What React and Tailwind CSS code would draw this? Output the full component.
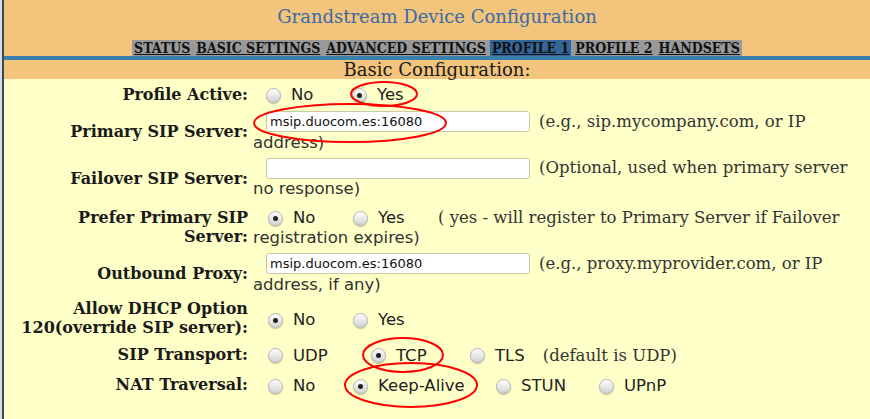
import React from "react";

const serif = "font-['DejaVu_Serif','Liberation_Serif',serif]";
const cond = "font-['DejaVu_Serif_Condensed','DejaVu_Serif',serif]";
const sans = "font-['DejaVu_Sans','Liberation_Sans',sans-serif]";

const tabs = [
  { name: "STATUS" },
  { name: "BASIC SETTINGS" },
  { name: "ADVANCED SETTINGS" },
  { name: "PROFILE 1", active: true },
  { name: "PROFILE 2" },
  { name: "HANDSETS" },
];

function Radio({ checked }) {
  return (
    <span className="relative inline-flex h-[15px] w-[15px] shrink-0 items-center justify-center rounded-full border border-[#b4b4b4] bg-linear-to-b from-white to-[#d2d2d2] shadow-[0_1px_1px_rgba(0,0,0,0.25)]">
      {checked && <span className="h-[5px] w-[5px] rounded-full bg-[#222]" />}
    </span>
  );
}

function Option({ label, checked, width }) {
  return (
    <div className={`flex items-center ${width || ""}`}>
      <Radio checked={checked} />
      <span className={`${sans} ml-[10px] text-[16.5px] text-[#222]`}>{label}</span>
    </div>
  );
}

function Row({ label, h, children }) {
  return (
    <div className={`flex items-center ${h}`}>
      <div className={`${serif} w-[244px] shrink-0 text-right text-[16px] font-bold leading-[19px] text-[#1a1a1a]`}>
        {label}
      </div>
      <div className="ml-[5px] flex-1 whitespace-nowrap text-[16.5px] leading-[20px] text-[#333]">
        {children}
      </div>
    </div>
  );
}

function TextBox({ value }) {
  return (
    <input
      readOnly
      value={value}
      className={`${sans} ml-[13px] h-[21px] w-[264px] rounded-[3px] border border-[#c9c9a8] bg-white px-[3px] text-[13px] text-[#111] outline-none`}
    />
  );
}

export default function App() {
  return (
    <div className="flex h-[419px] w-[870px] overflow-hidden bg-[#ffffc8]">
      <div className="w-[2px] bg-[#d9dee4]" />
      <div className="w-[2px] bg-[#3b4757]" />
      <div className="relative flex-1">
        <div className="bg-[#f3c47c]">
          <div className={`${serif} flex h-[40px] items-start justify-center pt-[3px] text-[18px] text-[#3a6aa6]`}>
            Grandstream Device Configuration
          </div>
          <div className="flex h-[16px] justify-center">
            <div className={`${cond} flex h-[16px] bg-[#999999] text-[14px] font-bold leading-[16px] text-[#111]`}>
              {tabs.map((t, i) => (
                <span
                  key={t.name}
                  className={`px-[2px] underline ${i > 0 ? "ml-[2px]" : ""} ${t.active ? "bg-[#33669a]" : ""}`}
                >
                  {t.name}
                </span>
              ))}
            </div>
          </div>
          <div className="h-[4px] bg-[#3a80ac]" />
          <div className={`${serif} h-[19px] text-center text-[18px] leading-[19px] text-[#1a1a1a]`}>
            Basic Configuration:
          </div>
        </div>

        <Row label="Profile Active:" h="h-[31px]">
          <div className="flex items-center pl-[13px] pt-[1px]">
            <Option label="No" width="w-[86px]" />
            <Option label="Yes" checked />
          </div>
        </Row>

        <Row label="Primary SIP Server:" h="h-[43px]">
          <div className="flex h-[22px] items-center">
            <TextBox value="msip.duocom.es:16080" />
            <span className={`${serif} ml-[9px]`}>(e.g., sip.mycompany.com, or IP</span>
          </div>
          <div className={sans}>address)</div>
        </Row>

        <Row label="Failover SIP Server:" h="h-[50px]">
          <div className="flex h-[22px] items-center">
            <TextBox value="" />
            <span className={`${serif} ml-[9px]`}>(Optional, used when primary server</span>
          </div>
          <div className={sans}>no response)</div>
        </Row>

        <Row
          label={
            <>
              Prefer Primary SIP
              <br />
              Server:
            </>
          }
          h="h-[47px]"
        >
          <div className="flex items-center pl-[15px] pt-[3px]">
            <Option label="No" checked width="w-[85px]" />
            <Option label="Yes" width="w-[85px]" />
            <span className={serif}>( yes - will register to Primary Server if Failover</span>
          </div>
          <div className={sans}>registration expires)</div>
        </Row>

        <Row label="Outbound Proxy:" h="h-[47px]">
          <div className="flex h-[22px] items-center">
            <TextBox value="msip.duocom.es:16080" />
            <span className={`${serif} ml-[9px]`}>(e.g., proxy.myprovider.com, or IP</span>
          </div>
          <div className={sans}>address, if any)</div>
        </Row>

        <Row
          label={
            <>
              Allow DHCP Option
              <br />
              120(override SIP server):
            </>
          }
          h="h-[42px]"
        >
          <div className="flex items-center pl-[15px] pt-[4px]">
            <Option label="No" checked width="w-[85px]" />
            <Option label="Yes" />
          </div>
        </Row>

        <Row label="SIP Transport:" h="h-[31px]">
          <div className="flex items-center pl-[15px] pt-[2px]">
            <Option label="UDP" width="w-[103px]" />
            <Option label="TCP" checked width="w-[99px]" />
            <Option label="TLS" />
            <span className={`${serif} ml-[18px]`}>(default is UDP)</span>
          </div>
        </Row>

        <Row label="NAT Traversal:" h="h-[29px]">
          <div className="flex items-center pl-[15px] pt-[3px]">
            <Option label="No" width="w-[85px]" />
            <Option label="Keep-Alive" checked width="w-[143px]" />
            <Option label="STUN" width="w-[103px]" />
            <Option label="UPnP" />
          </div>
        </Row>

        <svg className="pointer-events-none absolute left-[-4px] top-0 h-[419px] w-[870px]" viewBox="0 0 870 419">
          <g fill="none" stroke="#ff0000" strokeWidth="2">
            <ellipse cx="384" cy="94" rx="33" ry="12" />
            <ellipse cx="350" cy="123" rx="96" ry="19" />
            <ellipse cx="403" cy="355" rx="40" ry="17" />
            <ellipse cx="411" cy="385" rx="66" ry="22" />
          </g>
        </svg>
      </div>
    </div>
  );
}
